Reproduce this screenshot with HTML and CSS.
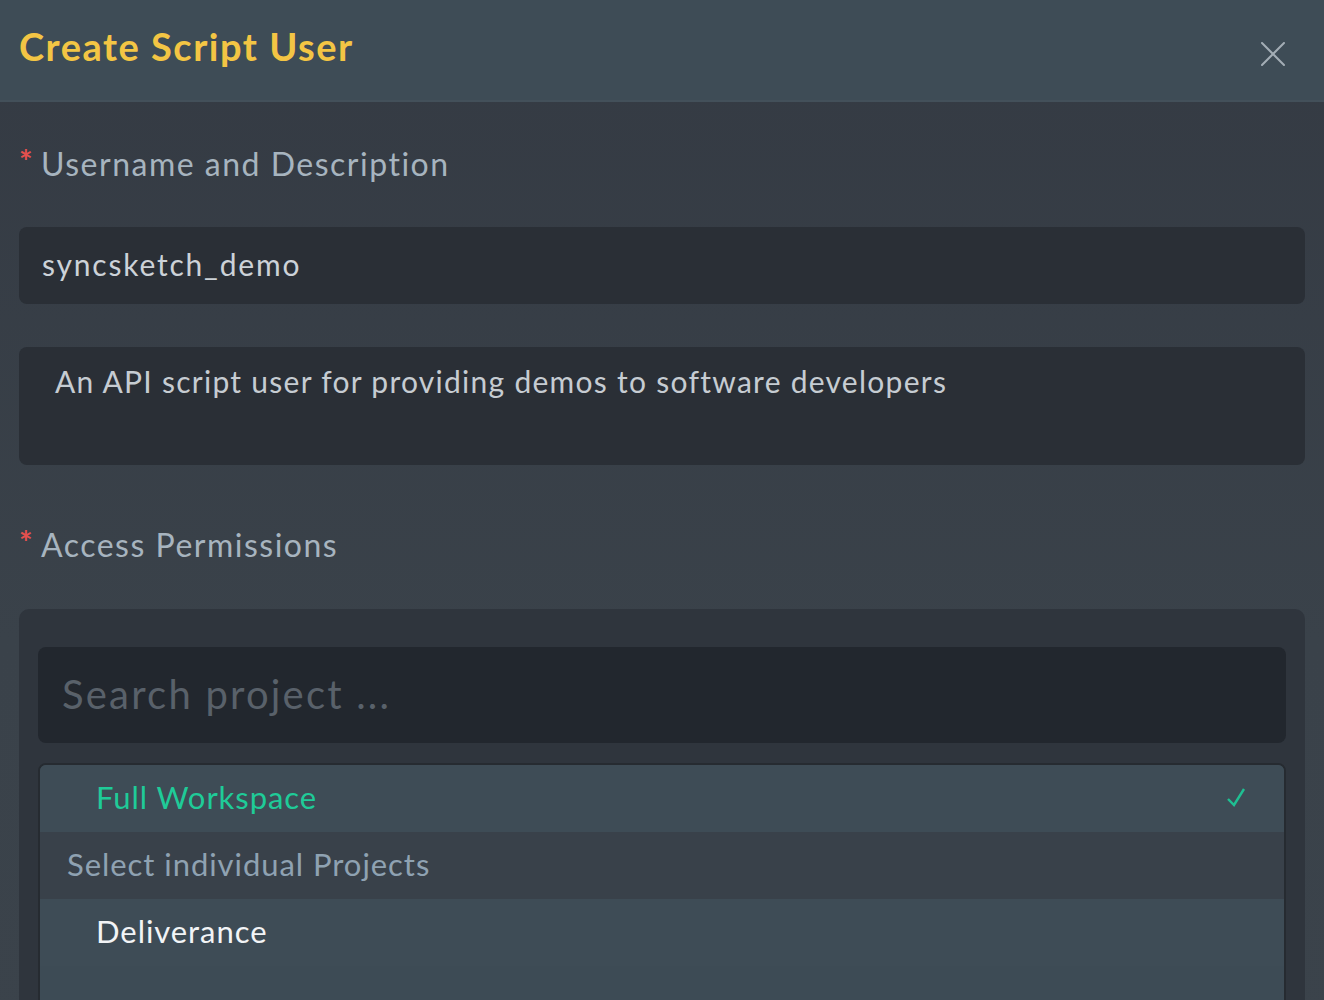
FILE: index.html
```html
<!DOCTYPE html>
<html lang="en">
<head>
<meta charset="utf-8">
<title>Create Script User</title>
<link rel="stylesheet" href="styles.css">
</head>
<body>
<div class="modal">
  <header class="modal-header">
    <h1 class="modal-title">Create Script User</h1>
    <button class="close-btn" aria-label="Close">
      <svg width="24" height="24" viewBox="0 0 24 24"><path d="M1 1 L23 23 M23 1 L1 23" stroke="#a3adb5" stroke-width="2" fill="none" stroke-linecap="round"/></svg>
    </button>
  </header>
  <main class="modal-body">
    <div class="field-label"><span class="req">*</span>Username and Description</div>
    <div class="input">syncsketch_demo</div>
    <div class="textarea">An API script user for providing demos to software developers</div>
    <div class="field-label perm-label"><span class="req">*</span>Access Permissions</div>
    <div class="perm-box">
      <div class="search">Search project ...</div>
      <div class="list">
        <div class="row row-selected">
          <span>Full Workspace</span>
          <svg class="check" width="20" height="22" viewBox="0 0 20 22"><path d="M2 13 L8 19 L18 3" stroke="#1fbf92" stroke-width="2.4" fill="none"/></svg>
        </div>
        <div class="row row-group">Select individual Projects</div>
        <div class="row row-item">Deliverance</div>
      </div>
    </div>
  </main>
</div>
</body>
</html>
```

FILE: styles.css
```css
html, body {
  margin: 0;
  padding: 0;
  background: #383f47;
  height: 100%;
  overflow: hidden;
}
body {
  font-family: "Lato", "Open Sans", sans-serif;
}
.modal {
  min-height: 1000px;
  background: linear-gradient(#343a43, #3a424a 60%, #3b434b);
}
.modal-header {
  height: 100px;
  background: #3e4c56;
  border-bottom: 2px solid #43505a;
  display: flex;
  align-items: flex-start;
  justify-content: space-between;
  padding: 0 39px 0 19px;
}
.modal-title {
  margin: 22px 0 0;
  font-size: 38px;
  line-height: 48px;
  font-weight: 700;
  color: #f3c544;
  letter-spacing: 1.5px;
}
.close-btn {
  margin-top: 42px;
  background: none;
  border: 0;
  padding: 0;
  width: 24px;
  height: 24px;
  display: flex;
}
.modal-body {
  padding: 0 19px;
}
.field-label {
  margin-top: 42px;
  height: 40px;
  line-height: 40px;
  font-size: 32px;
  color: #a7b4bf;
  letter-spacing: 1.5px;
  display: flex;
}
.req {
  color: #e4504e;
  font-size: 32px;
  font-weight: 700;
  width: 22px;
  line-height: 36px;
  letter-spacing: 0;
}
.input {
  margin-top: 43px;
  height: 77px;
  box-sizing: border-box;
  background: #2a2f36;
  border-radius: 8px;
  padding: 0 23px 4px;
  display: flex;
  align-items: center;
  font-size: 30px;
  color: #ccd2d8;
  letter-spacing: 1.8px;
}
.textarea {
  margin-top: 43px;
  height: 118px;
  box-sizing: border-box;
  background: #2a2f36;
  border-radius: 8px;
  padding: 16px 36px;
  font-size: 30px;
  line-height: 36px;
  color: #c6ccd2;
  letter-spacing: 1.27px;
}
.perm-label {
  margin-top: 60px;
}
.perm-box {
  margin-top: 44px;
  background: #2f353d;
  border-radius: 10px;
  padding: 38px 19px 0;
  height: 420px;
}
.search {
  height: 96px;
  box-sizing: border-box;
  background: #22272e;
  border-radius: 8px;
  padding: 0 24px 2px;
  display: flex;
  align-items: center;
  font-size: 40px;
  color: #59616a;
  letter-spacing: 2.2px;
}
.list {
  margin-top: 20px;
  border: 2px solid #262b31;
  border-radius: 8px;
  overflow: hidden;
  background: #3d4b55;
  height: 300px;
}
.row {
  height: 67px;
  box-sizing: border-box;
  padding-bottom: 4px;
  display: flex;
  align-items: center;
  font-size: 31px;
  letter-spacing: 0.95px;
}
.row-selected {
  background: #3e4c56;
  color: #1fcb98;
  padding-left: 56px;
  padding-right: 38px;
  justify-content: space-between;
}
.check {
  display: block;
}
.row-group {
  background: #39414a;
  color: #8fa2b2;
  padding-left: 27px;
}
.row-item {
  background: #3e4c56;
  color: #f2f4f6;
  padding-left: 56px;
}
```
